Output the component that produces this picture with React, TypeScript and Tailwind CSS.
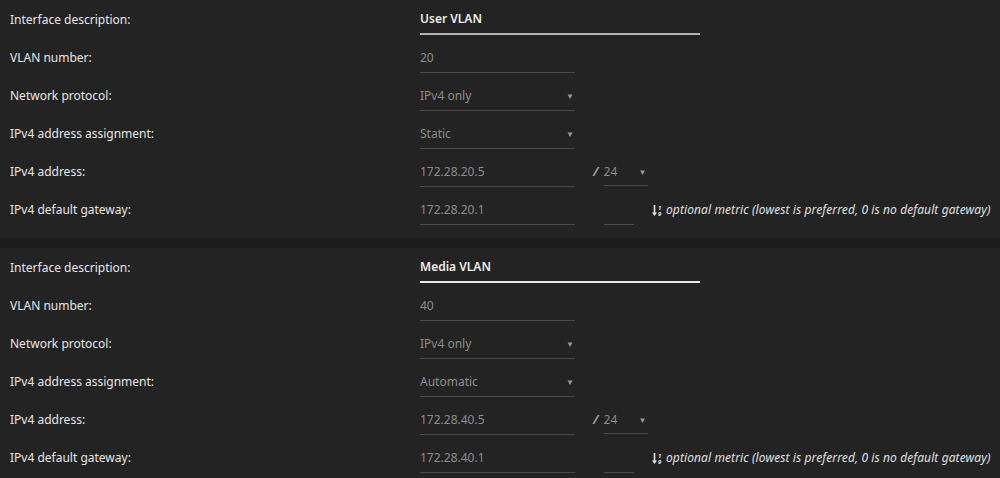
import React from "react";

const font = { fontFamily: '"Noto Sans", "Open Sans", sans-serif' };

function Row({ label, children }: { label: string; children: React.ReactNode }) {
  return (
    <div className="flex h-[38px] items-center">
      <div className="w-[420px] shrink-0 pl-[10px] text-[12px] text-[#e6e6e6]">{label}</div>
      <div className="flex items-center">{children}</div>
    </div>
  );
}

function Field({ value, w = "w-[155px]", select = false }: { value: string; w?: string; select?: boolean }) {
  return (
    <div className={`${w} flex h-[30px] items-center justify-between border-b border-[#4a4a4a] text-[12px] text-[#8c8c8c]`}>
      <span>{value}</span>
      {select && <span className="pr-[1px] text-[8px] text-[#9a9a9a]">▼</span>}
    </div>
  );
}

function MetricIcon() {
  return (
    <svg width="12" height="13" viewBox="0 0 12 13" className="shrink-0">
      <path d="M2.5 1 V10" stroke="#e6e6e6" strokeWidth="1.6" />
      <path d="M0 8.5 L2.5 12 L5 8.5 Z" fill="#e6e6e6" />
      <text x="6" y="5.5" fontSize="6" fontWeight="700" fill="#e6e6e6" fontFamily="Noto Sans, sans-serif">1</text>
      <text x="6" y="12" fontSize="6" fontWeight="700" fill="#e6e6e6" fontFamily="Noto Sans, sans-serif">9</text>
    </svg>
  );
}

function Section({
  desc,
  vlan,
  assign,
  addr,
  gw,
  focus,
}: {
  desc: string;
  vlan: string;
  assign: string;
  addr: string;
  gw: string;
  focus: boolean;
}) {
  return (
    <div className="bg-[#232323] pt-[1px] pb-[9px]">
      <Row label="Interface description:">
        <div
          className={`flex h-[30px] w-[280px] items-center border-b-2 text-[12px] font-semibold text-[#ececec] ${
            focus ? "border-[#e8e8e8]" : "border-[#b4b4b4]"
          }`}
        >
          {desc}
        </div>
      </Row>
      <Row label="VLAN number:">
        <Field value={vlan} />
      </Row>
      <Row label="Network protocol:">
        <Field value="IPv4 only" select />
      </Row>
      <Row label="IPv4 address assignment:">
        <Field value={assign} select />
      </Row>
      <Row label="IPv4 address:">
        <Field value={addr} />
        <span className="ml-[18px] mr-[5px] text-[13px] font-bold italic text-[#a0a0a0]">/</span>
        <div className="flex h-[28px] w-[44px] items-center justify-between border-b border-[#4a4a4a] text-[12px] text-[#8c8c8c]">
          <span>24</span>
          <span className="pr-[1px] text-[8px] text-[#9a9a9a]">▼</span>
        </div>
      </Row>
      <Row label="IPv4 default gateway:">
        <Field value={gw} />
        <div className="ml-[29px] h-[30px] w-[30px] border-b border-[#4a4a4a]" />
        <div className="ml-[18px] flex items-center gap-[2px] text-[12px] italic tracking-[0.1px] text-[#e0e0e0]">
          <MetricIcon />
          <span>optional metric (lowest is preferred, 0 is no default gateway)</span>
        </div>
      </Row>
    </div>
  );
}

export default function App() {
  return (
    <div className="h-[478px] w-[1000px] overflow-hidden bg-[#1b1b1b]" style={font}>
      <Section desc="User VLAN" vlan="20" assign="Static" addr="172.28.20.5" gw="172.28.20.1" focus={false} />
      <div className="h-[10px] bg-[#1c1c1c]" />
      <Section desc="Media VLAN" vlan="40" assign="Automatic" addr="172.28.40.5" gw="172.28.40.1" focus />
    </div>
  );
}
